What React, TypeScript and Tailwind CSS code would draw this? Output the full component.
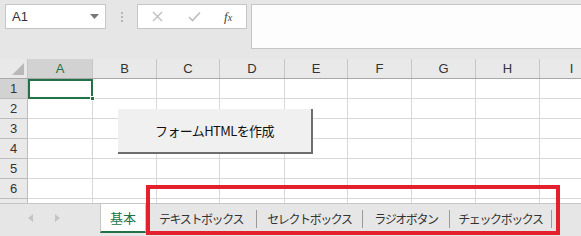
import React from 'react';

const cols = [
  { label: 'A', w: 65 },
  { label: 'B', w: 64 },
  { label: 'C', w: 63 },
  { label: 'D', w: 65 },
  { label: 'E', w: 63 },
  { label: 'F', w: 64 },
  { label: 'G', w: 64 },
  { label: 'H', w: 64 },
  { label: 'I', w: 64 },
];

const rows = ['1', '2', '3', '4', '5', '6'];

const tabs = [
  { label: 'テキストボックス', w: 111 },
  { label: 'セレクトボックス', w: 106 },
  { label: 'ラジオボタン', w: 87 },
  { label: 'チェックボックス', w: 102 },
];

const jp = "font-['Noto_Sans_CJK_JP','Noto_Sans',sans-serif]";

export default function App() {
  return (
    <div className="w-[581px] h-[236px] overflow-hidden bg-[#e6e6e6] relative font-['Liberation_Sans',Arial,sans-serif] text-[#222]">
      {/* Formula bar */}
      <div className="h-[59px] flex items-start pt-[4px] pl-[5px]">
        <div className="w-[101px] h-[25px] bg-white border border-[#c6c6c6] flex items-center justify-between pl-[6px] pr-[6px]">
          <span className="text-[13px] text-[#333]">A1</span>
          <svg width="9" height="5" viewBox="0 0 9 5">
            <path d="M0 0 L9 0 L4.5 5 Z" fill="#777" />
          </svg>
        </div>
        <div className="w-[31px] h-[25px] flex items-center justify-center">
          <div className="flex flex-col gap-[2px]">
            <span className="w-[2px] h-[2px] bg-[#b5b5b5]" />
            <span className="w-[2px] h-[2px] bg-[#b5b5b5]" />
            <span className="w-[2px] h-[2px] bg-[#b5b5b5]" />
          </div>
        </div>
        <div className="w-[110px] h-[25px] bg-white border border-[#c6c6c6] flex items-center pl-[14px]">
          <svg width="11" height="11" viewBox="0 0 11 11">
            <path d="M1 1 L10 10 M10 1 L1 10" stroke="#bdbdbd" strokeWidth="1.3" />
          </svg>
          <svg className="ml-[25px]" width="13" height="11" viewBox="0 0 13 11">
            <path d="M1 6 L4.5 9.5 L12 1.5" stroke="#bdbdbd" strokeWidth="1.6" fill="none" />
          </svg>
          <span className="ml-[23px] text-[13px] italic font-['Liberation_Serif',serif] text-[#444]">
            f<span className="text-[10px]">x</span>
          </span>
        </div>
        <div className="ml-[4px] flex-1 h-[45px] bg-[#fdfdfd] border border-[#c6c6c6] border-r-0" />
      </div>

      {/* Grid */}
      <div className="relative h-[144px] bg-white overflow-hidden">
        {/* header row */}
        <div className="flex h-[20px] bg-[#e9e9e9] border-b border-[#a8a8a8]">
          <div className="w-[28px] shrink-0 relative border-r border-[#c6c6c6]">
            <svg className="absolute right-[3px] bottom-[3px]" width="12" height="12" viewBox="0 0 12 12">
              <path d="M12 0 L12 12 L0 12 Z" fill="#b9b9b9" />
            </svg>
          </div>
          {cols.map((c, i) => (
            <div
              key={c.label}
              style={{ width: c.w }}
              className={`shrink-0 flex items-center justify-center text-[13px] border-r border-[#c6c6c6] ${
                i === 0 ? 'bg-[#d2d2d2] text-[#217346]' : 'text-[#333]'
              }`}
            >
              {c.label}
            </div>
          ))}
        </div>
        {rows.map((r, ri) => (
          <div key={r} className="flex h-[20px]">
            <div
              className={`w-[28px] shrink-0 flex items-center justify-center text-[13px] text-[#333] border-r border-b border-[#bdbdbd] ${
                ri === 0 ? 'bg-[#d2d2d2]' : 'bg-[#e9e9e9]'
              }`}
            >
              {r}
            </div>
            {cols.map((c) => (
              <div key={c.label} style={{ width: c.w }} className="shrink-0 border-r border-b border-[#d9d9d9]" />
            ))}
          </div>
        ))}
        {/* partial row 7 */}
        <div className="flex h-[20px]">
          <div className="w-[28px] shrink-0 bg-[#e9e9e9] border-r border-[#bdbdbd]" />
          {cols.map((c) => (
            <div key={c.label} style={{ width: c.w }} className="shrink-0 border-r border-[#d9d9d9]" />
          ))}
        </div>

        {/* selection */}
        <div className="absolute left-[28px] top-[20px] w-[65px] h-[20px] border-2 border-[#217346]">
          <span className="absolute right-[-4px] bottom-[-4px] w-[5px] h-[5px] bg-[#217346] border border-white" />
        </div>

        {/* form button */}
        <div className="absolute left-[118px] top-[50px] w-[195px] h-[45px] bg-[#f0f0f0] border-r-2 border-b-2 border-[#6e6e6e] flex items-center justify-center">
          <span className={`${jp} text-[13px] text-[#111] tracking-[-0.6px]`}>フォームHTMLを作成</span>
        </div>
      </div>

      {/* Sheet tabs */}
      <div className="h-[33px] flex items-stretch border-t border-[#c6c6c6] bg-[#e6e6e6] whitespace-nowrap">
        <div className="w-[100px] shrink-0 flex items-center pl-[28px] gap-[22px] pb-[4px]">
          <svg width="5" height="8" viewBox="0 0 5 8">
            <path d="M5 0 L0 4 L5 8 Z" fill="#c4c4c4" />
          </svg>
          <svg width="5" height="8" viewBox="0 0 5 8">
            <path d="M0 0 L5 4 L0 8 Z" fill="#c4c4c4" />
          </svg>
        </div>
        <div className="w-[46px] shrink-0 h-[29px] bg-white border-l border-r border-[#c6c6c6] border-b-2 border-b-[#217346] flex items-center justify-center">
          <span className={`${jp} text-[13px] text-[#217346]`}>基本</span>
        </div>
        {tabs.map((t) => (
          <div key={t.label} style={{ width: t.w }} className="h-[29px] shrink-0 flex items-center">
            <span className={`${jp} flex-1 text-center text-[12px] tracking-[-1.4px] text-[#333]`}>{t.label}</span>
            <span className="w-px h-[18px] bg-[#9a9a9a]" />
          </div>
        ))}
      </div>

      {/* red highlight */}
      <div className="absolute left-[146px] top-[185px] w-[414px] h-[50px] border-[4px] border-[#e3202b] pointer-events-none" />
    </div>
  );
}
